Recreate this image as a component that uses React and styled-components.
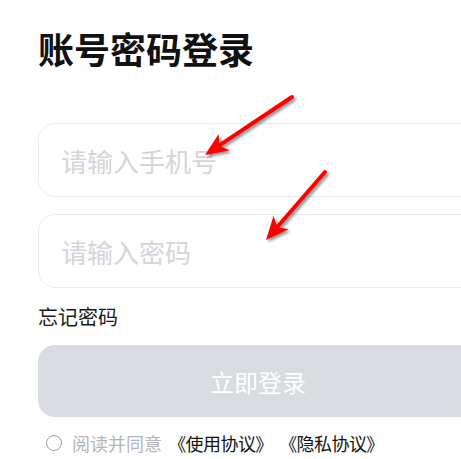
import React from "react";
import styled, { createGlobalStyle } from "styled-components";

const Global = createGlobalStyle`
  html, body { margin: 0; padding: 0; background: #ffffff; }
  body { font-family: "Noto Sans CJK SC", "Noto Sans", sans-serif; overflow: hidden; }
`;

const Page = styled.div`
  position: relative;
  width: 461px;
  height: 459px;
  overflow: hidden;
`;

const Content = styled.div`
  width: 440px;
  padding: 25px 0 0 38px;
  display: flex;
  flex-direction: column;
`;

const Title = styled.h1`
  margin: 0 0 52px;
  font-size: 36px;
  line-height: 46px;
  font-weight: 700;
  color: #111;
`;

const Field = styled.input`
  box-sizing: border-box;
  width: 100%;
  height: 74px;
  margin-bottom: ${(p) => p.$gap}px;
  padding: 0 22px;
  border: 1.5px solid #ebecee;
  border-radius: 17px;
  font-family: inherit;
  font-size: 26px;
  color: #222;
  outline: none;
  background: #fff;
  &::placeholder { color: #d3d5da; }
`;

const Forgot = styled.div`
  margin-top: 15px;
  font-size: 20px;
  line-height: 28px;
  color: #1a1a1a;
`;

const LoginButton = styled.button`
  margin-top: 14px;
  height: 72px;
  width: 100%;
  border: none;
  border-radius: 17px;
  background: #d8dbdf;
  color: #fff;
  font-family: inherit;
  font-size: 24px;
`;

const Agree = styled.div`
  display: flex;
  align-items: center;
  margin-top: 14px;
  padding-left: 8px;
  font-size: 18px;
  line-height: 24px;
  color: #b3b5ba;
`;

const Radio = styled.span`
  box-sizing: border-box;
  width: 16px;
  height: 16px;
  border-radius: 50%;
  border: 1.5px solid #9a9ca0;
  margin-right: 10px;
`;

const Link = styled.span`
  color: #111;
  font-feature-settings: "palt";
  letter-spacing: -0.5px;
  margin-left: ${(p) => p.$ml}px;
`;

const Overlay = styled.svg`
  position: absolute;
  left: 0;
  top: 0;
  pointer-events: none;
`;

function Arrow({ x1, y1, x2, y2 }) {
  const dx = x2 - x1;
  const dy = y2 - y1;
  const len = Math.hypot(dx, dy);
  const ux = dx / len;
  const uy = dy / len;
  const hl = 23;
  const hw = 10;
  const bx = x2 - ux * hl;
  const by = y2 - uy * hl;
  const nx = -uy;
  const ny = ux;
  const inner = 0.75;
  const ix = x2 - ux * hl * inner;
  const iy = y2 - uy * hl * inner;
  const pts = `${x2},${y2} ${bx + nx * hw},${by + ny * hw} ${ix},${iy} ${bx - nx * hw},${by - ny * hw}`;
  return (
    <g filter="url(#sh)">
      <line x1={x1} y1={y1} x2={ix} y2={iy} stroke="#ff0000" strokeWidth="4" strokeLinecap="round" />
      <polygon points={pts} fill="#ff0000" />
    </g>
  );
}

export default function App() {
  return (
    <Page>
      <Global />
      <Content>
        <Title>账号密码登录</Title>
        <Field placeholder="请输入手机号" $gap={17} />
        <Field placeholder="请输入密码" type="password" $gap={0} />
        <Forgot>忘记密码</Forgot>
        <LoginButton>立即登录</LoginButton>
        <Agree>
          <Radio />
          阅读并同意
          <Link $ml={15}>《使用协议》</Link>
          <Link $ml={24}>《隐私协议》</Link>
        </Agree>
      </Content>
      <Overlay width="461" height="459" viewBox="0 0 461 459">
        <defs>
          <filter id="sh" x="-20%" y="-20%" width="140%" height="140%">
            <feDropShadow dx="2" dy="2" stdDeviation="1.5" floodColor="#000" floodOpacity="0.45" />
          </filter>
        </defs>
        <Arrow x1={292} y1={97} x2={205} y2={155} />
        <Arrow x1={325} y1={172} x2={266} y2={240} />
      </Overlay>
    </Page>
  );
}
